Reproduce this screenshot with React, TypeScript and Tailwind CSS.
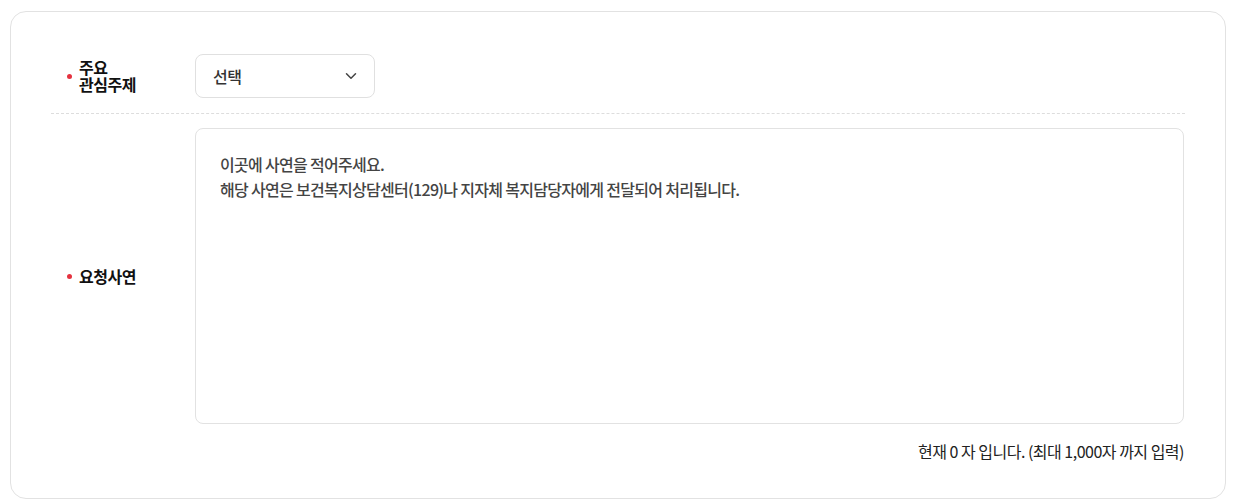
import { ChevronDown } from "lucide-react";

const font = { fontFamily: '"Noto Sans CJK KR", "Noto Sans", sans-serif' };

function Label({ children }: { children: React.ReactNode }) {
  return (
    <div className="w-[144px] shrink-0 flex items-center pl-[16px]">
      <span className="w-[5px] h-[5px] rounded-full bg-[#e5323f] mr-[7px] self-center" />
      <span className="text-[16px] leading-[17px] font-bold text-[#111] tracking-[-0.5px]">{children}</span>
    </div>
  );
}

export default function App() {
  return (
    <div className="bg-white w-[1237px] h-[504px] pt-[11px] pl-[10px]" style={font}>
      <div className="w-[1216px] h-[488px] border border-[#e2e2e2] rounded-[16px] px-[40px] pt-[27px]">
        {/* 주요 관심주제 */}
        <div className="flex items-center pt-[15px] pb-[15px] border-b border-dashed border-[#dddddd]">
          <Label>
            주요
            <br />
            관심주제
          </Label>
          <div className="w-[180px] h-[44px] border border-[#e0e0e0] rounded-[8px] flex items-center justify-between pl-[17px] pr-[14px]">
            <span className="text-[16px] font-medium text-[#333] tracking-[-0.5px]">선택</span>
            <ChevronDown className="w-[18px] h-[18px] text-[#444]" strokeWidth={2} />
          </div>
        </div>

        {/* 요청사연 */}
        <div className="flex items-stretch pt-[14px]">
          <Label>요청사연</Label>
          <div className="flex-1 h-[296px] border border-[#e2e2e2] rounded-[8px] px-[24px] pt-[23px] mr-[1px]">
            <p className="text-[16px] leading-[25px] font-medium text-[#444] tracking-[-0.7px]">
              이곳에 사연을 적어주세요.
              <br />
              해당 사연은 보건복지상담센터(129)나 지자체 복지담당자에게 전달되어 처리됩니다.
            </p>
          </div>
        </div>
        <div className="flex justify-end pt-[15px] pr-[1px]">
          <span className="text-[16px] text-[#222] tracking-[-0.5px]">
            현재 0 자 입니다. (최대 1,000자 까지 입력)
          </span>
        </div>
      </div>
    </div>
  );
}
